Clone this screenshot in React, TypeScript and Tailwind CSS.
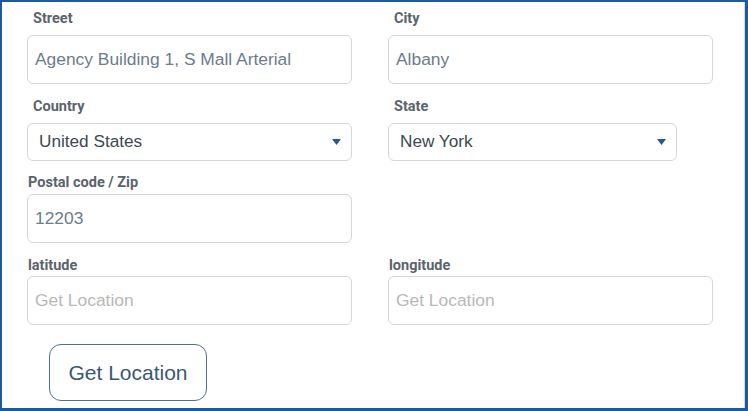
import { ReactNode } from 'react';

const labelFont = { fontFamily: 'Roboto, "Liberation Sans", Arial, sans-serif' };
const fieldFont = { fontFamily: '"Liberation Sans", Arial, sans-serif' };

function Label({ children, indent = true }: { children: ReactNode; indent?: boolean }) {
  return (
    <div
      className={`h-[20px] pt-[2px] text-[14.5px] leading-[18px] font-bold text-[#5a636e] ${indent ? 'pl-[6px]' : 'pl-[1px]'}`}
      style={labelFont}
    >
      {children}
    </div>
  );
}

function TextField({ value, placeholder }: { value?: string; placeholder?: string }) {
  return (
    <div
      className="flex h-[49px] w-full items-center rounded-md border border-[#d6d6d6] bg-white pl-[7px]"
      style={fieldFont}
    >
      {value ? (
        <span className="text-[17.4px] text-[#6b7c8e]">{value}</span>
      ) : (
        <span className="text-[17.4px] text-[#b8b8b8]">{placeholder}</span>
      )}
    </div>
  );
}

function SelectField({ value, className = '' }: { value: string; className?: string }) {
  return (
    <div
      className={`flex h-[38px] items-center justify-between rounded-md border border-[#d6d6d6] bg-white pl-[11px] pr-[10px] ${className}`}
      style={fieldFont}
    >
      <span className="text-[17.2px] text-[#3b4856]">{value}</span>
      <svg width="9" height="6" viewBox="0 0 9 6">
        <path d="M0 0h9L4.5 6z" fill="#1d5a96" />
      </svg>
    </div>
  );
}

export default function App() {
  return (
    <div className="h-[411px] w-[748px] border-t-2 border-l-2 border-r-[3px] border-b-[3px] border-[#1d5a9a] bg-white">
      <div className="h-full border-r border-[#d9d9d9]">
        <div className="grid grid-cols-[325px_325px] gap-x-[36px] pl-[25px] pt-[6px]">
          <div>
            <Label>Street</Label>
            <div className="mt-[7px]">
              <TextField value="Agency Building 1, S Mall Arterial" />
            </div>
          </div>
          <div>
            <Label>City</Label>
            <div className="mt-[7px]">
              <TextField value="Albany" />
            </div>
          </div>

          <div className="mt-[12px]">
            <Label>Country</Label>
            <div className="mt-[7px]">
              <SelectField value="United States" className="w-full" />
            </div>
          </div>
          <div className="mt-[12px]">
            <Label>State</Label>
            <div className="mt-[7px]">
              <SelectField value="New York" className="w-[289px]" />
            </div>
          </div>

          <div className="mt-[11px]">
            <Label indent={false}>Postal code / Zip</Label>
            <div className="mt-[2px]">
              <TextField value="12203" />
            </div>
          </div>
          <div />

          <div className="mt-[12px]">
            <Label indent={false}>latitude</Label>
            <div className="mt-[1px]">
              <TextField placeholder="Get Location" />
            </div>
          </div>
          <div className="mt-[12px]">
            <Label indent={false}>longitude</Label>
            <div className="mt-[1px]">
              <TextField placeholder="Get Location" />
            </div>
          </div>
        </div>

        <div className="pl-[47px] pt-[19px]">
          <button
            className="h-[57px] w-[158px] rounded-[12px] border border-[#4d7191] bg-white text-[21px] text-[#3a5874]"
            style={fieldFont}
          >
            Get Location
          </button>
        </div>
      </div>
    </div>
  );
}
